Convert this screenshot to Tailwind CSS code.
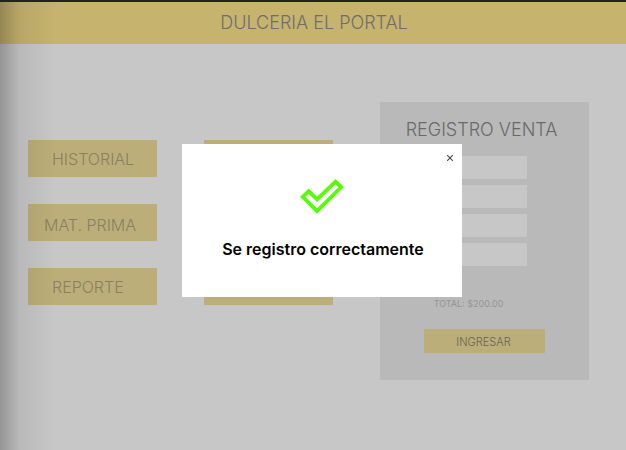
<!DOCTYPE html>
<html lang="es">
<head>
<meta charset="utf-8">
<meta name="viewport" content="width=device-width, initial-scale=1">
<title>Dulceria El Portal</title>
<script src="https://cdn.jsdelivr.net/npm/@tailwindcss/browser@4"></script>
</head>
<body class="relative min-h-screen bg-[#c7c7c7] font-['Inter',sans-serif] font-light">
  <header class="flex h-11 items-center justify-center border-t-2 border-[#222222] bg-[#c5b36e] pl-0.5">
    <h1 class="text-lg text-[#6f6e6a]">DULCERIA EL PORTAL</h1>
  </header>

  <main class="flex items-start justify-between pr-[37px] pl-7 pt-[58px]">
    <nav class="mt-[38px] grid grid-cols-[129px_129px] auto-rows-[37px] gap-x-[47px] gap-y-[27px] text-base text-[#878065]" aria-label="Menú">
      <button type="button" class="bg-[#bcae78] pl-6 text-left">HISTORIAL</button>
      <button type="button" class="bg-[#bcae78]" aria-label="Opción 2"></button>
      <button type="button" class="bg-[#bcae78] pt-1 pl-4 text-left">MAT. PRIMA</button>
      <button type="button" class="bg-[#bcae78]" aria-label="Opción 4"></button>
      <button type="button" class="bg-[#bcae78] pl-6 text-left">REPORTE</button>
      <button type="button" class="bg-[#bcae78]" aria-label="Opción 6"></button>
    </nav>

    <form class="flex w-[209px] flex-col items-center bg-[#b9b9b9] pt-3.5 pb-[27px]">
      <h2 class="pr-1.5 text-lg leading-7 text-[#696969]">REGISTRO VENTA</h2>
      <div class="mt-3 flex flex-col gap-1.5">
        <input type="text" aria-label="Campo 1" class="h-[23px] w-[85px] bg-[#c7c7c7]">
        <input type="text" aria-label="Campo 2" class="h-[23px] w-[85px] bg-[#c7c7c7]">
        <input type="text" aria-label="Campo 3" class="h-[23px] w-[85px] bg-[#c7c7c7]">
        <input type="text" aria-label="Campo 4" class="h-[23px] w-[85px] bg-[#c7c7c7]">
      </div>
      <p class="mt-8 pr-8 text-[9px] leading-3 font-normal text-[#959595]">TOTAL: $200.00</p>
      <button type="button" class="mt-[19px] h-6 w-[121px] bg-[#bcae78] pt-0.5 pr-0.5 text-[11px] text-[#65625a]">INGRESAR</button>
    </form>
  </main>

  <div class="pointer-events-none absolute top-0.5 bottom-0 left-0 w-14 bg-linear-to-r from-black/25 via-black/7 via-35% to-transparent"></div>

  <section role="dialog" aria-modal="true" aria-labelledby="aviso" class="absolute top-36 left-[182px] flex h-[153px] w-[280px] flex-col items-center bg-white pt-[35px]">
    <button type="button" aria-label="Cerrar" class="absolute top-2 right-1.5 flex size-3 items-center justify-center">
      <svg class="size-[6px]" viewBox="0 0 6 6" fill="none" stroke="#444444" stroke-width="1.1" aria-hidden="true"><path d="M.2.2 5.8 5.8M5.8.2.2 5.8"/></svg>
    </button>
    <svg class="h-[35px] w-11" viewBox="0 0 44 35" fill="none" stroke="#55ff00" stroke-width="3.8" stroke-linejoin="miter" aria-hidden="true"><path d="M2.8 17.8 8.7 12.2 17 20.4 35.6 2.7 41.2 8 17 32Z"/></svg>
    <h2 id="aviso" class="mt-[23px] pl-0.5 text-base leading-6 font-semibold text-black">Se registro correctamente</h2>
  </section>
</body>
</html>
